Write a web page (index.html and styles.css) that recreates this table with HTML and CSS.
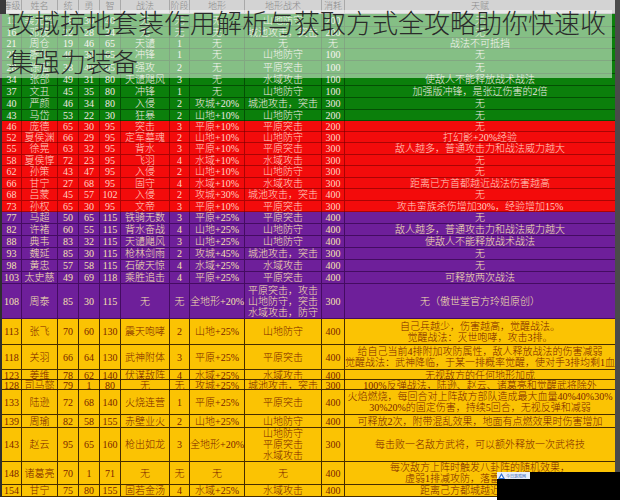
FILE: index.html
```html
<!DOCTYPE html>
<html lang="zh-CN">
<head>
<meta charset="utf-8">
<title>攻城掠地套装作用解析</title>
<link rel="stylesheet" href="styles.css">
</head>
<body>
<div class="page">
  <div class="sheet">
    <div class="row hd h14"><span>等级</span><span>姓名</span><span>统</span><span>勇</span><span>智</span><span>战法</span><span>阶段</span><span>地形</span><span>地形战术</span><span>消耗</span><span>天赋</span></div>

    <div class="sec g">
      <div class="row h13"><span>11</span><span>裴元绍</span><span>18</span><span>30</span><span>40</span><span>无</span><span>无</span><span>无</span><span>山地防守</span><span>200</span><span>无</span></div>
      <div class="row h11"><span>16</span><span>邓茂</span><span>22</span><span>28</span><span>34</span><span>无</span><span>无</span><span>无</span><span>城池攻击，突击</span><span>200</span><span>无</span></div>
      <div class="row h11"><span>21</span><span>周仓</span><span>19</span><span>46</span><span>65</span><span>天谴</span><span>1</span><span>无</span><span>无</span><span>无</span><span>战法不可抵挡</span></div>
      <div class="row h12"><span>25</span><span>廖化</span><span>40</span><span>38</span><span>65</span><span>冲锋</span><span>1</span><span>无</span><span>山地防守</span><span>100</span><span>无</span></div>
      <div class="row h13"><span>28</span><span>徐盛</span><span>38</span><span>40</span><span>65</span><span>强攻</span><span>2</span><span>无</span><span>平原突击</span><span>100</span><span>无</span></div>
      <div class="row h12"><span>34</span><span>张郃</span><span>49</span><span>31</span><span>80</span><span>天谴飓风</span><span>3</span><span>无</span><span>水域攻击</span><span>100</span><span>使敌人不能释放战术战法</span></div>
      <div class="row h12"><span>37</span><span>文丑</span><span>45</span><span>35</span><span>80</span><span>冲锋</span><span>1</span><span>无</span><span>山地防守</span><span>100</span><span>加强版冲锋，是张辽伤害的2倍</span></div>
      <div class="row h12"><span>40</span><span>严颜</span><span>46</span><span>34</span><span>80</span><span>入侵</span><span>2</span><span>攻城+20%</span><span>城池攻击，突击</span><span>300</span><span>无</span></div>
      <div class="row h11"><span>43</span><span>马岱</span><span>53</span><span>22</span><span>30</span><span>狂暴</span><span>2</span><span>山地+10%</span><span>山地防守</span><span>200</span><span>无</span></div>
    </div>

    <div class="sec r">
      <div class="row h11"><span>46</span><span>庞德</span><span>65</span><span>30</span><span>95</span><span>突击</span><span>3</span><span>平原+10%</span><span>平原突击</span><span>200</span><span>无</span></div>
      <div class="row h11"><span>52</span><span>夏侯渊</span><span>66</span><span>29</span><span>95</span><span>定军墓魂</span><span>2</span><span>山地+10%</span><span>山地防守</span><span>300</span><span>打幻影+20%经验</span></div>
      <div class="row h12"><span>55</span><span>徐晃</span><span>63</span><span>32</span><span>95</span><span>背水</span><span>3</span><span>平原+10%</span><span>平原突击</span><span>300</span><span>敌人越多，普通攻击力和战法威力越大</span></div>
      <div class="row h11"><span>58</span><span>夏侯惇</span><span>72</span><span>23</span><span>95</span><span>飞羽</span><span>4</span><span>水域+10%</span><span>水域攻击</span><span>300</span><span>无</span></div>
      <div class="row h12"><span>62</span><span>孙策</span><span>43</span><span>47</span><span>95</span><span>入侵</span><span>2</span><span>山地+10%</span><span>山地防守</span><span>300</span><span>无</span></div>
      <div class="row h11"><span>66</span><span>甘宁</span><span>27</span><span>68</span><span>95</span><span>固守</span><span>4</span><span>水域+10%</span><span>水域攻击</span><span>300</span><span>距离已方首都越近战法伤害越高</span></div>
      <div class="row h12"><span>68</span><span>吕蒙</span><span>45</span><span>57</span><span>102</span><span>入侵</span><span>2</span><span>攻城+30%</span><span>城池攻击，突击</span><span>400</span><span>无</span></div>
      <div class="row h11"><span>73</span><span>孙权</span><span>65</span><span>30</span><span>95</span><span>文帝</span><span>3</span><span>平原+10%</span><span>平原突击</span><span>300</span><span>攻击蛮族杀伤增加30%，经验增加15%</span></div>
    </div>

    <div class="sec p">
      <div class="row h12"><span>77</span><span>马超</span><span>50</span><span>65</span><span>115</span><span>铁骑无数</span><span>3</span><span>平原+25%</span><span>平原突击</span><span>400</span><span>无</span></div>
      <div class="row h12"><span>82</span><span>许褚</span><span>60</span><span>55</span><span>115</span><span>背水奋战</span><span>4</span><span>山地+25%</span><span>山地防守</span><span>400</span><span>敌人越多，普通攻击力和战法威力越大</span></div>
      <div class="row h12"><span>88</span><span>典韦</span><span>83</span><span>32</span><span>115</span><span>天谴飓风</span><span>3</span><span>山地+25%</span><span>山地防守</span><span>400</span><span>使敌人不能释放战术战法</span></div>
      <div class="row h12"><span>93</span><span>魏延</span><span>85</span><span>30</span><span>115</span><span>枪林剑雨</span><span>2</span><span>攻城+45%</span><span>城池攻击，突击</span><span>300</span><span>无</span></div>
      <div class="row h12"><span>98</span><span>黄忠</span><span>57</span><span>58</span><span>115</span><span>石破天惊</span><span>4</span><span>水域+25%</span><span>水域攻击</span><span>400</span><span>无</span></div>
      <div class="row h12"><span>103</span><span>太史慈</span><span>49</span><span>69</span><span>118</span><span>乘胜追击</span><span>4</span><span>平原+25%</span><span>平原突击</span><span>400</span><span>可释放两次战法</span></div>
      <div class="row h35"><span>108</span><span>周泰</span><span>85</span><span>30</span><span>115</span><span>无</span><span>无</span><span>全地形+20%</span><span><i>平原突击，攻击</i><i>山地防守，突击</i><i>水域攻击，防守</i></span><span>300</span><span>无（傲世堂官方玲姐原创）</span></div>
    </div>

    <div class="sec y">
      <div class="row h26"><span>113</span><span>张飞</span><span>70</span><span>60</span><span>130</span><span>震天咆哮</span><span>2</span><span>山地+25%</span><span>山地防守</span><span>400</span><span><i>自己兵越少，伤害越高，觉醒战法。</i><i>觉醒战法：灭世咆哮，攻击3排。</i></span></div>
      <div class="row h25"><span>118</span><span>关羽</span><span>66</span><span>64</span><span>130</span><span>武神附体</span><span>3</span><span>平原+25%</span><span>平原突击</span><span>400</span><span><i>给自己当前4排附加攻防属性，敌人释放战法的伤害减弱</i><i>觉醒战法：武神降临，于某一排概率觉醒，使对手3排均剩1血</i></span></div>
      <div class="row h10"><span>123</span><span>姜维</span><span>78</span><span>62</span><span>140</span><span>伏谋敌阵</span><span>4</span><span>水域+25%</span><span>水域攻击</span><span>400</span><span>无视敌方的任何地形加成</span></div>
      <div class="row h10"><span>128</span><span>司马懿</span><span>79</span><span>1</span><span>80</span><span>无</span><span>无</span><span>攻城+25%</span><span>城池攻击，突击</span><span>300</span><span>100%反弹战法，陆逊、赵云、诸葛亮和觉醒武将除外</span></div>
      <div class="row h25"><span>133</span><span>陆逊</span><span>72</span><span>68</span><span>140</span><span>火烧连营</span><span>1</span><span>平原+25%</span><span>平原突击</span><span>400</span><span><i>火焰燃烧，每回合对上阵敌方部队造成最大血量40%40%30%</i><i>30%20%的固定伤害，持续5回合，无视反弹和减弱</i></span></div>
      <div class="row h13"><span>139</span><span>周瑜</span><span>82</span><span>58</span><span>155</span><span>赤壁业火</span><span>2</span><span>山地+25%</span><span>山地防守</span><span>400</span><span>可释放2次，附带混乱效果，地面有点燃效果时伤害增加</span></div>
      <div class="row h34"><span>143</span><span>赵云</span><span>95</span><span>65</span><span>160</span><span>枪出如龙</span><span>3</span><span>全地形+20%</span><span><i>山地防守</i><i>平原突击</i><i>水域攻击</i></span><span>300</span><span>每击败一名敌方武将，可以额外释放一次武将技</span></div>
      <div class="row h23"><span>148</span><span>诸葛亮</span><span>70</span><span>1</span><span>71</span><span>无</span><span>无</span><span>无</span><span>无</span><span>400</span><span><i>每次敌方上阵时触发八卦阵的随机效果，</i><i>虚弱1排减攻防，落雷攻击敌方1排</i></span></div>
      <div class="row h12"><span>154</span><span>甘宁</span><span>75</span><span>80</span><span>155</span><span>固若金汤</span><span>4</span><span>水域+25%</span><span>水域攻击</span><span>400</span><span>距离己方都城越近伤害越高</span></div>
    </div>
  </div>

  <div class="title">
    <p>攻城掠地套装作用解析与获取方式全攻略助你快速收集强力装备</p>
  </div>

  <i class="corner"></i>

  <div class="mask">
    <span class="logo">
      <svg width="7" height="6" viewBox="0 0 7 6"><path d="M3.5 0 L7 6 L0 6 Z" fill="#2f6fd0"/><path d="M3.5 2.2 L5 5 L2 5 Z" fill="#fff"/></svg>
      <b>今日游戏网</b>
    </span>
  </div>
</div>
</body>
</html>
```

FILE: styles.css
```css
body {
  margin: 0;
  background: #fff;
}

.page {
  position: relative;
  width: 620px;
  height: 500px;
  overflow: hidden;
  background: #fff;
  font-family: "Liberation Serif", "Noto Sans CJK SC", serif;
  font-size: 10px;
  font-weight: 300;
}

.sheet {
  width: 613px;
  border-left: 2px solid #2e2e2e;
  border-right: 5px solid #4a4a4a;
}

.row {
  display: grid;
  grid-template-columns: 20px 36px 21px 21px 21px 49px 20px 55px 77px 23px 270px;
  box-sizing: border-box;
  border-bottom: 1px solid var(--ln);
}

.row > span {
  display: flex;
  flex-direction: column;
  align-items: center;
  justify-content: center;
  border-right: 1px solid var(--ln);
  white-space: nowrap;
  line-height: 11px;
  min-width: 0;
}

.row > span:last-child {
  border-right: none;
}

.row i {
  font-style: normal;
  display: block;
}

.h10 { height: 10px; }
.h11 { height: 11px; }
.h12 { height: 12px; }
.h13 { height: 13px; }
.h14 { height: 14px; }
.h23 { height: 23px; }
.h25 { height: 25px; }
.h26 { height: 26px; }
.h34 { height: 34px; }
.h35 { height: 35px; }

.hd {
  --ln: #a9a9a9;
  background: #d3d3d3;
  color: #8c8c8c;
  font-size: 9px;
}

.g {
  --ln: rgba(0, 40, 0, 0.55);
  background: #0b7f0b;
  color: #f1e8e4;
}

.r {
  --ln: rgba(110, 0, 0, 0.55);
  background: #f30b0b;
  color: #ffd2c2;
}

.p {
  --ln: rgba(40, 0, 60, 0.6);
  background: #6e1f9a;
  color: #f6e2ae;
}

.y {
  --ln: rgba(50, 28, 0, 0.9);
  background: #fbc303;
  color: #7a2400;
}

.title {
  position: absolute;
  left: 0;
  top: 10px;
  width: 612px;
  height: 68px;
  background: rgba(255, 255, 255, 0.5);
  box-sizing: border-box;
  padding-left: 8px;
}

.title p {
  margin: -8px 0 0;
  font-family: "Noto Sans CJK SC", sans-serif;
  font-size: 26px;
  line-height: 39px;
  color: #2a2a2a;
  font-weight: 300;
}

.corner {
  position: absolute;
  left: 0;
  top: 0;
  width: 6px;
  height: 14px;
  background: #3a3a3a;
}

.mask {
  position: absolute;
  left: 497px;
  top: 472px;
  width: 123px;
  height: 28px;
  background: #000;
}

.logo {
  display: flex;
  align-items: center;
  gap: 1px;
  width: 32px;
  height: 7px;
  background: #e8eef8;
  padding-left: 1px;
}

.logo b {
  font-family: "Noto Sans CJK SC", sans-serif;
  font-size: 4px;
  line-height: 6px;
  font-weight: 400;
  color: #2f5fb0;
}
```
